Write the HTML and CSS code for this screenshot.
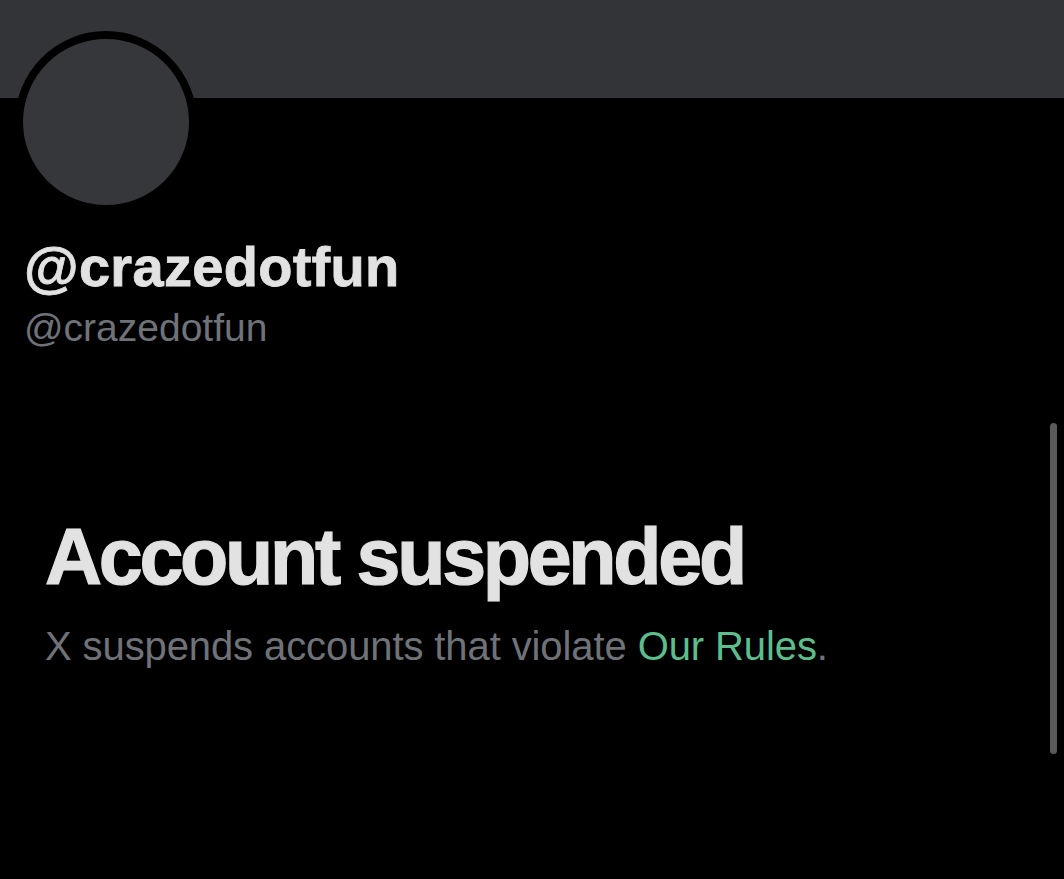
FILE: index.html
```html
<!DOCTYPE html>
<html lang="en">
<head>
<meta charset="utf-8">
<title>@crazedotfun</title>
<link rel="stylesheet" href="styles.css">
</head>
<body>
<div class="page">
  <div class="banner"></div>
  <div class="profile">
    <div class="avatar"></div>
    <div class="names">
      <div class="display-name">@crazedotfun</div>
      <div class="handle">@crazedotfun</div>
    </div>
  </div>
  <div class="notice">
    <h1 class="notice-title">Account suspended</h1>
    <p class="notice-text">X suspends accounts that violate <a class="notice-link" href="#">Our Rules</a>.</p>
  </div>
  <div class="scrollbar"></div>
</div>
</body>
</html>
```

FILE: styles.css
```css
html, body {
  margin: 0;
  padding: 0;
  background: #000;
}
body {
  font-family: "Liberation Sans", Arial, sans-serif;
  width: 1064px;
  height: 879px;
  overflow: hidden;
}
.page {
  position: relative;
  width: 1064px;
  height: 879px;
  background: #000;
}
.banner {
  height: 98px;
  background: #333438;
}
.profile {
  display: flex;
  flex-direction: column;
  padding-left: 15px;
}
.avatar {
  width: 166px;
  height: 166px;
  margin-top: -67px;
  border: 8px solid #000;
  border-radius: 50%;
  background: #36373b;
}
.names {
  margin-top: 22px;
  padding-left: 9px;
}
.display-name {
  font-size: 56px;
  line-height: 64px;
  font-weight: 700;
  color: #e2e2e2;
  letter-spacing: 0.3px;
  -webkit-text-stroke: 0.8px #e2e2e2;
}
.handle {
  margin-top: 6px;
  font-size: 39px;
  line-height: 46px;
  color: #6f7378;
}
.notice {
  margin-top: 161px;
  padding-left: 45px;
}
.notice-title {
  margin: 0;
  font-size: 79px;
  line-height: 90px;
  font-weight: 700;
  color: #e2e2e2;
  letter-spacing: -3.3px;
  -webkit-text-stroke: 1.2px #e2e2e2;
}
.notice-text {
  margin: 20px 0 0;
  font-size: 40px;
  line-height: 48px;
  color: #6f7378;
  letter-spacing: -0.1px;
}
.notice-link {
  color: #5dbd8c;
  text-decoration: none;
}
.scrollbar {
  position: absolute;
  left: 1050px;
  top: 423px;
  width: 7px;
  height: 331px;
  border-radius: 4px;
  background: #5a5a5c;
}
```
